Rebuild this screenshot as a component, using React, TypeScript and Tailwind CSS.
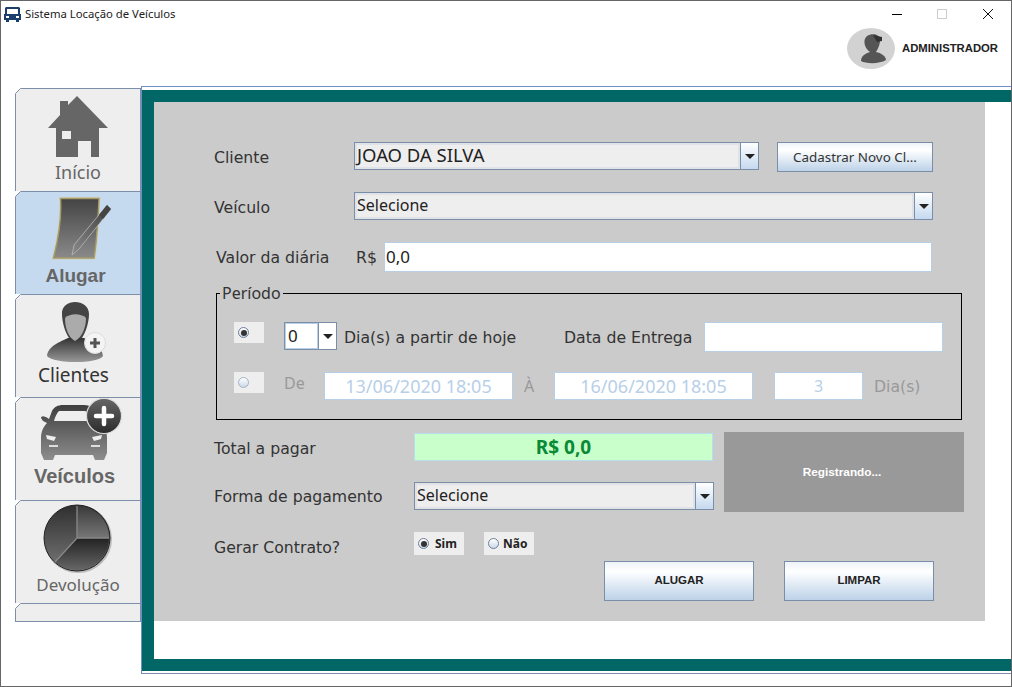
import type { ReactNode } from 'react'

const sans = 'font-["Noto_Sans",sans-serif]'
const tahoma = 'font-["DejaVu_Sans",sans-serif]'
const arial = 'font-["Liberation_Sans",sans-serif]'

function TabCorner() {
  return (
    <svg className="absolute -left-px -top-px" width="6" height="6" viewBox="0 0 6 6">
      <path d="M0 0H6L0 6Z" fill="#fff" />
      <path d="M0.5 5.5L5.5 0.5" stroke="#7d8ea8" fill="none" />
    </svg>
  )
}

function SideTab({
  viewY,
  active,
  label,
  labelClass,
  children,
}: {
  viewY: number
  active?: boolean
  label: string
  labelClass: string
  children: ReactNode
}) {
  return (
    <div className={`relative h-[103px] border-t border-[#7d8ea8] ${active ? 'bg-[#c5d9ef]' : 'bg-[#eeeeee]'}`}>
      <TabCorner />
      <svg className="block" width="125" height="72" viewBox={`16 ${viewY} 125 72`}>
        {children}
      </svg>
      <div className={`text-center leading-[24px] ${labelClass}`}>{label}</div>
    </div>
  )
}

function HomeIcon() {
  return (
    <path
      fillRule="evenodd"
      d="M77 96L108 128H99V157H91V141H78V157H56V128H48L60 115V101H68V105ZM62 131V139H71V131Z"
      fill="#666"
    />
  )
}

function RentIcon() {
  return (
    <>
      <defs>
        <linearGradient id="paper" x1="0" y1="0" x2="0" y2="1">
          <stop offset="0" stopColor="#444" />
          <stop offset="1" stopColor="#8a8a8a" />
        </linearGradient>
        <linearGradient id="pen" x1="1" y1="0" x2="0" y2="1">
          <stop offset="0" stopColor="#3d3d3d" />
          <stop offset="1" stopColor="#8a8a8a" />
        </linearGradient>
      </defs>
      <path
        d="M60.5 198.5H99C98 220 97 240 94 258H53.5C58 240 62 220 60.5 198.5Z"
        fill="none"
        stroke="#d8cd98"
        strokeOpacity="0.6"
        strokeWidth="3"
      />
      <path
        d="M60.5 198.5H99C98 220 97 240 94 258H53.5C58 240 62 220 60.5 198.5Z"
        fill="url(#paper)"
        stroke="#a59a68"
        strokeWidth="1.4"
      />
      <path d="M107 205L111 209L79 249L72 255L74 245Z" fill="url(#pen)" stroke="#b8b8b8" strokeWidth="0.8" />
      <path d="M107 205L111 209L103 219L99 215Z" fill="#444" />
    </>
  )
}

function ClientIcon() {
  return (
    <>
      <defs>
        <linearGradient id="body" x1="0" y1="0" x2="0" y2="1">
          <stop offset="0" stopColor="#333" />
          <stop offset="1" stopColor="#999" />
        </linearGradient>
      </defs>
      <path d="M47 356C48 346 60 342 68 338H84C92 342 102 346 103 356C98 364 54 364 47 356Z" fill="url(#body)" />
      <path d="M62 314C61 298 89 298 89 314C89 322 86 332 82 338H69C65 332 62 322 62 314Z" fill="#444" />
      <path d="M65 318C70 313 81 313 86 318C86 329 81 338 75 341C69 338 65 329 65 318Z" fill="#ababab" />
      <circle cx="95" cy="343" r="10.5" fill="#f4f4f4" stroke="#ddd" />
      <path d="M95 338V348M90 343H100" stroke="#555" strokeWidth="3" />
    </>
  )
}

function CarIcon() {
  return (
    <>
      <defs>
        <linearGradient id="car" x1="0" y1="0" x2="0" y2="1">
          <stop offset="0" stopColor="#3f3f3f" />
          <stop offset="1" stopColor="#8d8d8d" />
        </linearGradient>
        <linearGradient id="badge" x1="0" y1="0" x2="0" y2="1">
          <stop offset="0" stopColor="#666" />
          <stop offset="1" stopColor="#2b2b2b" />
        </linearGradient>
      </defs>
      <path
        fillRule="evenodd"
        d="M52 411C54 407 58 405 63 405H84C90 405 94 408 97 415L100 422C104 426 107 430 107 438V453L104 460H95L93 455H55L53 460H44L41 453V438C41 431 44 426 47 423L43 421L41 418C41 416 44 415 49 419ZM59 411C57 413 55 417 54 421H92C90 416 88 412 85 411Z"
        fill="url(#car)"
      />
      <path d="M46 435L56 437L54 441L47 439ZM102 435L92 437L94 441L101 439Z" fill="#eee" />
      <path d="M49 445H58V447H49ZM91 445H100V447H91Z" fill="#ddd" />
      <circle cx="104" cy="416" r="17.5" fill="url(#badge)" stroke="#ddd" strokeWidth="1.2" />
      <path d="M104 408V424M96 416H112" stroke="#fff" strokeWidth="4.5" strokeLinecap="round" />
    </>
  )
}

function ReturnIcon() {
  return (
    <>
      <defs>
        <linearGradient id="slice" x1="0" y1="0" x2="0" y2="1">
          <stop offset="0" stopColor="#2f2f2f" />
          <stop offset="1" stopColor="#777" />
        </linearGradient>
        <linearGradient id="slice2" x1="0" y1="0" x2="0" y2="1">
          <stop offset="0" stopColor="#222" />
          <stop offset="1" stopColor="#666" />
        </linearGradient>
        <linearGradient id="slice3" x1="0" y1="0" x2="0" y2="1">
          <stop offset="0" stopColor="#3a3a3a" />
          <stop offset="1" stopColor="#777" />
        </linearGradient>
      </defs>
      <circle cx="78" cy="539" r="34" fill="#bbb" />
      <circle cx="77" cy="538" r="33" fill="url(#slice)" stroke="#222" strokeWidth="1" />
      <path d="M77 506C94 506 109 520 109 538H77Z" fill="url(#slice3)" />
      <path d="M77 538H109C109 556 95 570 77 570C68 570 61 567 55 562Z" fill="url(#slice2)" />
      <path d="M77 506V538H109M77 538L55 562" stroke="#888" strokeWidth="1.3" fill="none" />
    </>
  )
}

function Arrow() {
  return <span className="h-0 w-0 border-x-[5px] border-t-[5px] border-x-transparent border-t-[#222]" />
}

function Combo({ value, w, textClass = 'text-[16px]' }: { value: string; w: string; textClass?: string }) {
  return (
    <div className={`flex ${w} h-[28px] shrink-0 self-start border border-[#7a8ea8] ${sans} ${textClass} text-[#222]`}>
      <div className="flex min-w-0 flex-1 items-center border-2 border-[#dfe3e8] bg-[#eeeeee] pb-[2px] leading-none">{value}</div>
      <div className="flex w-[18px] items-center justify-center border-l border-[#7a8ea8] bg-gradient-to-b from-white to-[#c5d9ef]">
        <Arrow />
      </div>
    </div>
  )
}

function Radio({ checked, dim }: { checked?: boolean; dim?: boolean }) {
  return (
    <span
      className={`flex h-[11px] w-[11px] shrink-0 items-center justify-center rounded-full border ${
        dim ? 'border-[#a5b2c4]' : 'border-[#6f8098]'
      } bg-gradient-to-b from-white to-[#cbd9ea]`}
    >
      {checked && <span className="h-[6px] w-[6px] rounded-full bg-[#333]" />}
    </span>
  )
}

function Input({ children, w, className = '' }: { children?: ReactNode; w: string; className?: string }) {
  return (
    <div className={`flex ${w} shrink-0 items-center border border-[#b8cfe8] bg-white ${sans} ${className}`}>{children}</div>
  )
}

function Label({ children, w }: { children: ReactNode; w: string }) {
  return <div className={`${w} shrink-0 pt-[2px] ${tahoma} text-[15.7px] leading-none text-[#333]`}>{children}</div>
}

function GlossButton({ label, w, h, className }: { label: string; w: string; h: string; className: string }) {
  return (
    <div
      className={`flex ${w} ${h} items-center justify-center border border-[#7a8ea8] bg-gradient-to-b from-[#eef3f9] via-white via-25% to-[#bdd2e8] ${className}`}
    >
      {label}
    </div>
  )
}

export default function App() {
  return (
    <div className="flex h-[687px] w-[1012px] flex-col overflow-hidden border border-[#666] bg-white">
      {/* Title bar and user */}
      <div className="relative h-[85px] shrink-0">
        <div className="flex h-[26px] items-center pl-[3px]">
          <svg width="17" height="15" viewBox="0 0 17 15">
            <path
              fillRule="evenodd"
              d="M2 0H15L16 1V7H17V13H15V15H12V13H5V15H2V13H0V7H1V1ZM3 2V7H14V2ZM2 9V11H5V9ZM12 9V11H15V9Z"
              fill="#1b3f6b"
            />
          </svg>
          <span className={`ml-[4px] ${sans} text-[11.3px] leading-none text-[#222]`}>Sistema Locação de Veículos</span>
          <div className="ml-auto flex items-center">
            <span className="h-px w-[10px] bg-black" />
            <span className="ml-[35px] h-[10px] w-[10px] border border-[#ccc]" />
            <svg className="ml-[36px] mr-[18px]" width="10" height="10" viewBox="0 0 10 10">
              <path d="M0 0L10 10M10 0L0 10" stroke="#111" fill="none" />
            </svg>
          </div>
        </div>
        <div className="flex items-center justify-end pr-[13px] pt-px">
          <svg width="48" height="41" viewBox="0 0 48 41">
            <ellipse cx="24" cy="20.5" rx="24" ry="20.5" fill="#d2d2d2" />
            <path d="M14 33C14 27 20 25 23 24C18 21 15 12 20 8C25 5 33 6 33 12C33 18 30 22 29 24C34 25 39 28 39 32C33 36 19 36 14 33Z" fill="#555" />
            <path d="M26 7L35 9V13L30 14Z" fill="#333" />
          </svg>
          <span className={`ml-[7px] ${arial} text-[11.3px] font-bold text-[#222]`}>ADMINISTRADOR</span>
        </div>
      </div>

      <div className="flex min-h-0 flex-1">
        {/* Side tabs */}
        <div className="ml-[14px] mt-[2px] h-[534px] w-[126px] shrink-0 border-x border-b border-[#7d8ea8] bg-[#eeeeee]">
          <SideTab viewY={89} label="Início" labelClass={`-mt-px ${sans} text-[18px] text-[#666]`}>
            <HomeIcon />
          </SideTab>
          <SideTab viewY={192} active label="Alugar" labelClass={`pr-[5px] ${arial} text-[19px] font-bold text-[#666]`}>
            <RentIcon />
          </SideTab>
          <SideTab viewY={295} label="Clientes" labelClass={`-mt-[4px] pr-[9px] ${sans} text-[19px] text-[#333]`}>
            <ClientIcon />
          </SideTab>
          <SideTab viewY={398} label="Veículos" labelClass={`-mt-[6px] pr-[7px] ${arial} text-[20px] font-bold text-[#666]`}>
            <CarIcon />
          </SideTab>
          <SideTab viewY={501} label="Devolução" labelClass={`${sans} text-[17px] text-[#666]`}>
            <ReturnIcon />
          </SideTab>
          <div className="relative border-t border-[#7d8ea8]">
            <TabCorner />
          </div>
        </div>

        {/* Main panel */}
        <div className="h-[588px] w-[871px] border-l border-t border-b border-[#6f8fc8] border-b-[#7d8ea8] pt-[3px] pb-[2px]">
          <div className="h-full border-y-[12px] border-l-[12px] border-[#006766]">
            <div className="h-[519px] w-[831px] bg-[#cbcbcb] pl-[60px] pt-[40px]">
              <div className="flex h-[30px] items-center">
                <Label w="w-[140px]">Cliente</Label>
                <Combo value="JOAO DA SILVA" w="w-[405px]" textClass="text-[18.5px]" />
                <GlossButton
                  label="Cadastrar Novo Cl..."
                  w="w-[156px] ml-[18px] self-start"
                  h="h-[30px]"
                  className={`${sans} text-[13.4px] text-[#333]`}
                />
              </div>
              <div className="mt-[20px] flex h-[30px] items-center">
                <Label w="w-[140px]">Veículo</Label>
                <Combo value="Selecione" w="w-[579px]" />
              </div>
              <div className="mt-[20px] flex h-[30px] items-center pl-[2px]">
                <Label w="w-[140px]">Valor da diária</Label>
                <Label w="w-[28px]">R$</Label>
                <Input w="w-[548px] h-[30px]" className="pl-[1px] text-[17px] text-[#222]">
                  0,0
                </Input>
              </div>

              {/* Período */}
              <fieldset className="ml-[2px] mt-[12px] h-[136px] w-[746px] border border-black pb-0 pl-[17px] pr-0">
                <legend className={`ml-[-14px] px-[2px] ${sans} text-[16px] leading-[18px] text-[#333]`}>Período</legend>
                <div className="mt-[20px] flex h-[30px] items-center">
                  <div className="flex h-[21px] w-[30px] items-center self-start bg-[#eeeeee] pl-[4px]">
                    <Radio checked />
                  </div>
                  <div className={`ml-[20px] flex h-[28px] w-[53px] self-start border border-[#7a8ea8] ${sans} text-[17px] text-[#222]`}>
                    <div className="flex-1 border border-[#b8cfe8] bg-white pl-[2px] leading-[24px]">0</div>
                    <div className="flex w-[18px] items-center justify-center border-l border-[#7a8ea8] bg-white">
                      <Arrow />
                    </div>
                  </div>
                  <div className="ml-[7px] w-[220px]">
                    <Label w="w-full">Dia(s) a partir de hoje</Label>
                  </div>
                  <Label w="w-[140px]">Data de Entrega</Label>
                  <Input w="w-[239px] h-[30px]" />
                </div>
                <div className="mt-[20px] flex h-[28px] items-center">
                  <div className="flex h-[21px] w-[30px] items-center self-start bg-[#eeeeee] pl-[4px]">
                    <Radio dim />
                  </div>
                  <div className={`ml-[20px] w-[40px] pb-[7px] ${sans} text-[16px] leading-none text-[#999]`}>De</div>
                  <Input w="w-[189px] h-[28px] justify-center" className="text-[18px] text-[#b8cfe8]">
                    13/06/2020 18:05
                  </Input>
                  <div className={`w-[41px] pl-[11px] ${sans} text-[16px] leading-none text-[#999]`}>À</div>
                  <Input w="w-[199px] h-[28px] justify-center" className="text-[18px] text-[#b8cfe8]">
                    16/06/2020 18:05
                  </Input>
                  <Input w="ml-[21px] w-[89px] h-[28px] justify-center" className="text-[16px] text-[#b8cfe8]">
                    3
                  </Input>
                  <div className={`ml-[11px] pt-[2px] ${tahoma} text-[15.7px] leading-none text-[#999]`}>Dia(s)</div>
                </div>
              </fieldset>

              {/* Pagamento */}
              <div className="mt-[12px] flex items-start">
                <div className="w-[200px]">
                  <div className="flex h-[31px] items-center">
                    <Label w="w-full">Total a pagar</Label>
                  </div>
                </div>
                <div className={`mt-px flex h-[28px] w-[299px] items-center justify-center border border-[#b8dff0] bg-[#c9ffca] ${sans} text-[19px] font-bold text-[#0a8a36]`}>
                  R$ 0,0
                </div>
                <div className={`ml-[11px] flex h-[80px] w-[240px] items-center justify-center bg-[#999999] pr-[4px] pt-px ${arial} text-[11.8px] font-bold text-white`}>
                  Registrando...
                </div>
              </div>
              <div className="mt-[-30px] flex h-[28px] items-center">
                <Label w="w-[200px]">Forma de pagamento</Label>
                <Combo value="Selecione" w="w-[300px]" />
              </div>
              <div className="mt-[22px] flex items-start">
                <div className="flex h-[29px] w-[200px] items-center">
                  <Label w="w-full">Gerar Contrato?</Label>
                </div>
                <div className={`flex h-[23px] w-[50px] items-center bg-[#eeeeee] pl-[4px] ${sans} text-[12px] font-bold text-[#222]`}>
                  <Radio checked />
                  <span className="ml-[6px]">Sim</span>
                </div>
                <div className={`ml-[20px] flex h-[23px] w-[50px] items-center bg-[#eeeeee] pl-[4px] ${sans} text-[12px] font-bold text-[#222]`}>
                  <Radio />
                  <span className="ml-[4px]">Não</span>
                </div>
              </div>
              <div className={`ml-[390px] mt-[-23px] flex gap-[30px] pt-[23px] ${arial} text-[11.5px] font-bold text-[#222]`}>
                <GlossButton label="ALUGAR" w="w-[150px]" h="h-[40px]" className="" />
                <GlossButton label="LIMPAR" w="w-[150px]" h="h-[40px]" className="" />
              </div>
            </div>
          </div>
        </div>
      </div>
    </div>
  )
}
